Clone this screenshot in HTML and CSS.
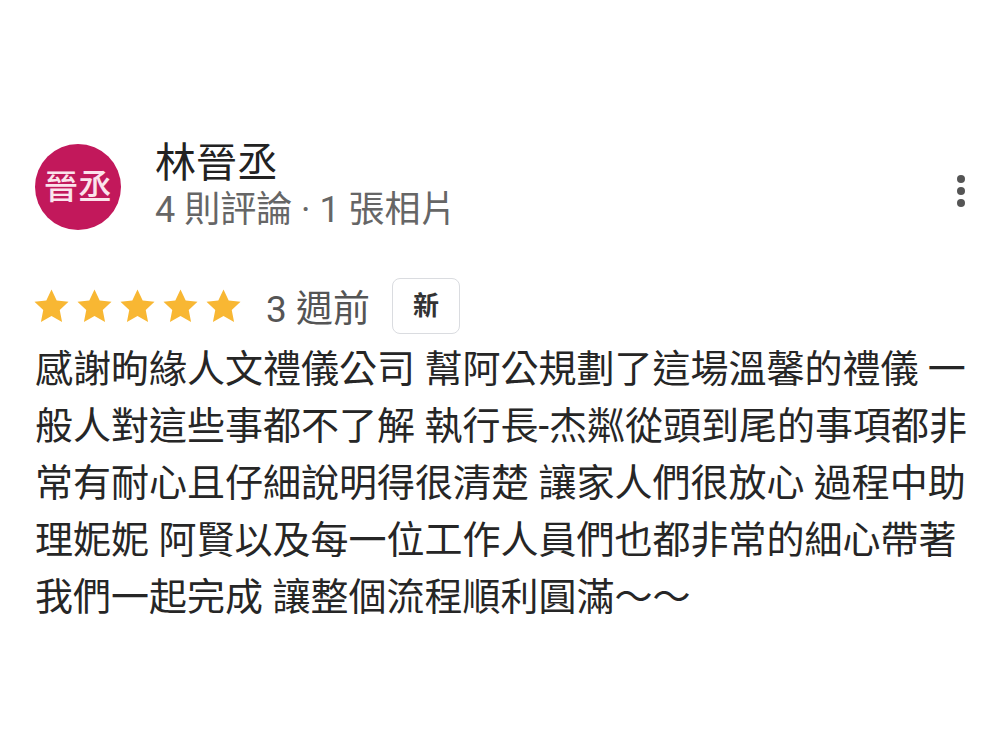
FILE: index.html
```html
<!DOCTYPE html>
<html lang="zh-Hant">
<head>
    <meta charset="UTF-8">
    <title>評論</title>
    <link rel="stylesheet" href="styles.css">
</head>
<body>
<div class="review">
    <div class="head">
        <div class="avatar">晉丞</div>
        <div class="who">
            <div class="name">林晉丞</div>
            <div class="meta">4 則評論 · 1 張相片</div>
        </div>
        <div class="more">
            <span></span>
            <span></span>
            <span></span>
        </div>
    </div>
    <div class="rating">
        <div class="stars">
            <svg viewBox="0 0 24 24"><path d="M12 2.5l2.9 6.1 6.6.8-4.9 4.6 1.3 6.6L12 17.3l-5.9 3.3 1.3-6.6L2.5 9.4l6.6-.8z"/></svg>
            <svg viewBox="0 0 24 24"><path d="M12 2.5l2.9 6.1 6.6.8-4.9 4.6 1.3 6.6L12 17.3l-5.9 3.3 1.3-6.6L2.5 9.4l6.6-.8z"/></svg>
            <svg viewBox="0 0 24 24"><path d="M12 2.5l2.9 6.1 6.6.8-4.9 4.6 1.3 6.6L12 17.3l-5.9 3.3 1.3-6.6L2.5 9.4l6.6-.8z"/></svg>
            <svg viewBox="0 0 24 24"><path d="M12 2.5l2.9 6.1 6.6.8-4.9 4.6 1.3 6.6L12 17.3l-5.9 3.3 1.3-6.6L2.5 9.4l6.6-.8z"/></svg>
            <svg viewBox="0 0 24 24"><path d="M12 2.5l2.9 6.1 6.6.8-4.9 4.6 1.3 6.6L12 17.3l-5.9 3.3 1.3-6.6L2.5 9.4l6.6-.8z"/></svg>
        </div>
        <div class="time">3 週前</div>
        <div class="badge">新</div>
    </div>
    <p class="text">感謝昫緣人文禮儀公司 幫阿公規劃了這場溫馨的禮儀 一般人對這些事都不了解 執行長-杰粼從頭到尾的事項都非常有耐心且仔細說明得很清楚 讓家人們很放心 過程中助理妮妮 阿賢以及每一位工作人員們也都非常的細心帶著我們一起完成 讓整個流程順利圓滿～～</p>
</div>
</body>
</html>
```

FILE: styles.css
```css
* {
    padding: 0;
    margin: 0;
}

body {
    background: #fff;
    font-family: Roboto, "Noto Sans CJK TC", sans-serif;
    color: #222;
}

.review {
    width: 945px;
    padding: 140px 20px 0 35px;
}

.head {
    display: flex;
    align-items: center;
    padding-right: 15px;
}

.avatar {
    width: 86px;
    height: 86px;
    border-radius: 50%;
    background: #c2185b;
    color: #fbe3ec;
    font-size: 34px;
    font-weight: 500;
    line-height: 86px;
    text-align: center;
    flex-shrink: 0;
}

.who {
    margin-left: 34px;
}

.name {
    font-size: 41px;
    line-height: 46px;
    color: #222;
}

.meta {
    font-size: 36px;
    line-height: 48px;
    color: #666;
}

.more {
    margin-left: auto;
    display: flex;
    flex-direction: column;
    gap: 4px;
    margin-top: 8px;
}

.more span {
    width: 8px;
    height: 8px;
    border-radius: 50%;
    background: #555;
}

.rating {
    display: flex;
    align-items: center;
    margin-top: 44px;
    height: 56px;
}

.stars {
    display: flex;
    margin-left: -5px;
}

.stars svg {
    width: 43px;
    height: 43px;
    fill: #f8b733;
}

.time {
    margin-left: 21px;
    font-size: 37px;
    color: #555;
}

.badge {
    margin-left: 22px;
    width: 66px;
    height: 54px;
    border: 1px solid #dadce0;
    border-radius: 8px;
    font-size: 26px;
    font-weight: bold;
    line-height: 54px;
    text-align: center;
    color: #333;
}

.text {
    margin-top: 7px;
    font-size: 38px;
    line-height: 57px;
    color: #262626;
}
```
